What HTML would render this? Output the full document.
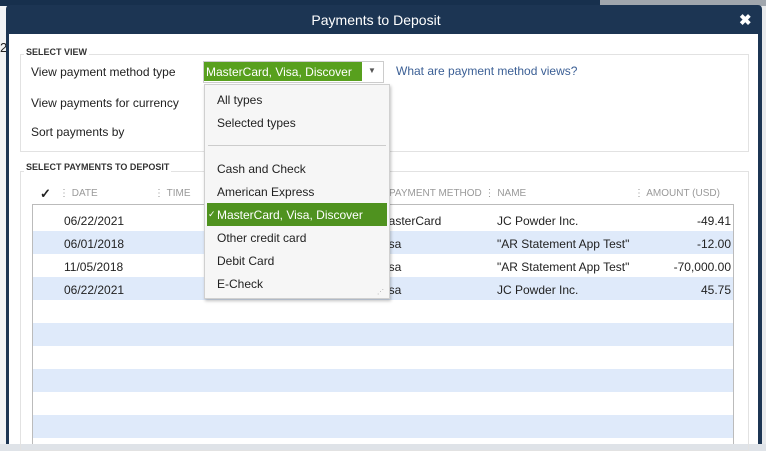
<!DOCTYPE html>
<html><head><meta charset="utf-8"><style>
*{margin:0;padding:0;box-sizing:border-box}
body{width:766px;height:444px;overflow:hidden;background:#dfe3e8;font-family:"Liberation Sans",Arial,sans-serif;font-size:12px;color:#222;position:relative}
.abs{position:absolute}
</style></head><body>
<div class="abs" style="left:0;top:0;width:766px;height:6px;background:#17304d"></div>
<div class="abs" style="left:600px;top:0;width:166px;height:6px;background:#a0a6ad"></div>
<div class="abs" style="left:0;top:6px;width:6px;height:438px;background:#f1f3f5"></div>
<div class="abs" style="left:0;top:40px;font-size:13px">2</div>
<div class="abs" style="left:762px;top:6px;width:4px;height:438px;background:#e8eaec"></div>
<div class="abs" style="left:6px;top:5px;width:756px;height:439px;background:#1c3553;border-radius:4px 4px 0 0"></div>
<div class="abs" style="left:9px;top:34px;width:749px;height:410px;background:#fff"></div>
<div class="abs" style="left:6px;top:12px;width:740px;text-align:center;color:#fff;font-size:14px">Payments to Deposit</div>
<div class="abs" style="left:739px;top:11px;color:#fff;font-size:15px;font-weight:bold">✖</div>
<div class="abs" style="left:20px;top:54px;width:729px;height:98px;border:1px solid #e2e2e2"></div>
<div class="abs" style="left:24px;top:47px;background:#fff;padding:0 2px;font-size:9px;font-weight:bold;color:#333">SELECT VIEW</div>
<div class="abs" style="left:31px;top:65px">View payment method type</div>
<div class="abs" style="left:31px;top:96px">View payments for currency</div>
<div class="abs" style="left:31px;top:125px">Sort payments by</div>
<div class="abs" style="left:203px;top:61px;width:181px;height:22px;border:1px solid #ccc;background:#fff"></div>
<div class="abs" style="left:204px;top:62px;width:158px;height:19px;background:#58a01e;color:#fff;padding:3px 2px;font-size:12px">MasterCard, Visa, Discover</div>
<div class="abs" style="left:368px;top:66px;font-size:8px;color:#555">▼</div>
<div class="abs" style="left:396px;top:64px;color:#3b5f95">What are payment method views?</div>
<div class="abs" style="left:20px;top:171px;width:729px;height:280px;border:1px solid #e2e2e2"></div>
<div class="abs" style="left:24px;top:162px;background:#fff;padding:0 2px;font-size:9px;font-weight:bold;color:#333">SELECT PAYMENTS TO DEPOSIT</div>
<div class="abs" style="left:40px;top:186px;font-size:13px;font-weight:bold">✓</div>
<div class="abs" style="left:59px;top:188px;font-size:10px;color:#999">⋮ DATE</div>
<div class="abs" style="left:154px;top:188px;font-size:10px;color:#999">⋮ TIME</div>
<div class="abs" style="left:389px;top:188px;font-size:10px;color:#999">PAYMENT METHOD ⋮ NAME</div>
<div class="abs" style="left:634px;top:188px;font-size:10px;color:#999">⋮ AMOUNT (USD)</div>
<div class="abs" style="left:32px;top:204px;width:702px;height:240px;border:1px solid #bbb;border-bottom:none;background:#fff"></div>
<div class="abs" style="left:33px;top:208px;width:700px;height:236px;background:repeating-linear-gradient(to bottom,#fff 0 23px,#dfeafa 23px 46px)"></div>
<div class="abs" style="left:64px;top:214px">06/22/2021</div>
<div class="abs" style="left:64px;top:237px">06/01/2018</div>
<div class="abs" style="left:64px;top:260px">11/05/2018</div>
<div class="abs" style="left:64px;top:283px">06/22/2021</div>
<div class="abs" style="left:386px;top:214px">lasterCard</div>
<div class="abs" style="left:386px;top:237px">isa</div>
<div class="abs" style="left:386px;top:260px">isa</div>
<div class="abs" style="left:386px;top:283px">isa</div>
<div class="abs" style="left:497px;top:214px">JC Powder Inc.</div>
<div class="abs" style="left:497px;top:237px">"AR Statement App Test"</div>
<div class="abs" style="left:497px;top:260px">"AR Statement App Test"</div>
<div class="abs" style="left:497px;top:283px">JC Powder Inc.</div>
<div class="abs" style="left:620px;top:214px;width:111px;text-align:right">-49.41</div>
<div class="abs" style="left:620px;top:237px;width:111px;text-align:right">-12.00</div>
<div class="abs" style="left:620px;top:260px;width:111px;text-align:right">-70,000.00</div>
<div class="abs" style="left:620px;top:283px;width:111px;text-align:right">45.75</div>
<div class="abs" style="left:204px;top:84px;width:186px;height:215px;background:#f6f6f6;border:1px solid #d0d0d0;box-shadow:1px 2px 3px rgba(0,0,0,.25)"></div>
<div class="abs" style="left:217px;top:93px">All types</div>
<div class="abs" style="left:217px;top:116px">Selected types</div>
<div class="abs" style="left:208px;top:145px;width:178px;height:1px;background:#ccc"></div>
<div class="abs" style="left:217px;top:162px">Cash and Check</div>
<div class="abs" style="left:217px;top:185px">American Express</div>
<div class="abs" style="left:207px;top:203px;width:180px;height:23px;background:#4f921f"></div>
<div class="abs" style="left:208px;top:209px;color:#fff;font-size:9px">✓</div>
<div class="abs" style="left:217px;top:208px;color:#fff">MasterCard, Visa, Discover</div>
<div class="abs" style="left:217px;top:231px">Other credit card</div>
<div class="abs" style="left:217px;top:254px">Debit Card</div>
<div class="abs" style="left:217px;top:277px">E-Check</div>
<div class="abs" style="left:377px;top:288px;font-size:7px;color:#aaa">⋰</div>
</body></html>
